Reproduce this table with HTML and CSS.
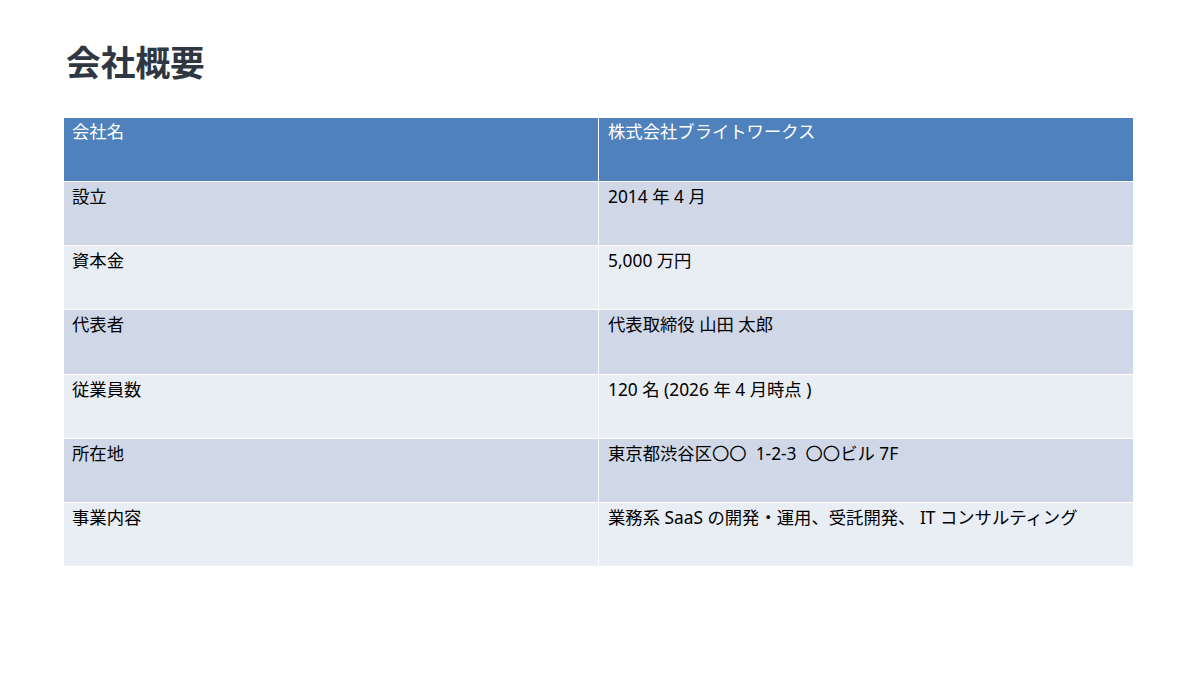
FILE: index.html
```html
<!DOCTYPE html>
<html lang="ja">
<head>
<meta charset="utf-8">
<title>会社概要</title>
<link rel="stylesheet" href="styles.css">
</head>
<body>
<div class="slide">
  <h1 class="title">会社概要</h1>
  <table class="info">
    <tr class="head"><td>会社名</td><td>株式会社ブライトワークス</td></tr>
    <tr class="odd"><td>設立</td><td>2014 年 4 月</td></tr>
    <tr class="even"><td>資本金</td><td>5,000 万円</td></tr>
    <tr class="odd tall"><td>代表者</td><td>代表取締役 山田 太郎</td></tr>
    <tr class="even"><td>従業員数</td><td>120 名 (2026 年 4 月時点 )</td></tr>
    <tr class="odd"><td>所在地</td><td>東京都渋谷区〇〇  1-2-3  〇〇ビル 7F</td></tr>
    <tr class="even"><td>事業内容</td><td>業務系 SaaS の開発・運用、受託開発、 IT コンサルティング</td></tr>
  </table>
</div>
</body>
</html>
```

FILE: styles.css
```css
html, body {
  margin: 0;
  padding: 0;
  background: #ffffff;
}
body {
  font-family: "Noto Sans", "Noto Sans CJK JP", sans-serif;
  color: #000000;
}
.slide {
  width: 1200px;
  height: 675px;
  padding: 36px 0 0 64px;
  box-sizing: border-box;
}
.title {
  margin: 0 0 0 2px;
  font-family: "Noto Sans CJK JP", sans-serif;
  font-size: 34.7px;
  line-height: 50px;
  font-weight: 700;
  color: #2e3742;
}
.info {
  margin-top: 32px;
  width: 1069px;
  border-collapse: collapse;
  table-layout: fixed;
}
.info td {
  height: 64px;
  box-sizing: border-box;
  padding: 2px 8px 0 8px;
  vertical-align: top;
  font-size: 17.33px;
  line-height: 24px;
  white-space: pre-wrap;
  border: 1px solid #ffffff;
}
.info tr:first-child td { border-top: none; }
.info tr:last-child td { border-bottom: none; }
.info td:first-child { border-left: none; }
.info td:last-child { border-right: none; padding-left: 9px; }
.head td {
  height: 63px;
  padding-top: 1px;
  background: #4f81bd;
  color: #ffffff;
}
.tall td { height: 65px; }
.odd td { background: #d0d8e8; }
.even td { background: #e9edf4; }
```
